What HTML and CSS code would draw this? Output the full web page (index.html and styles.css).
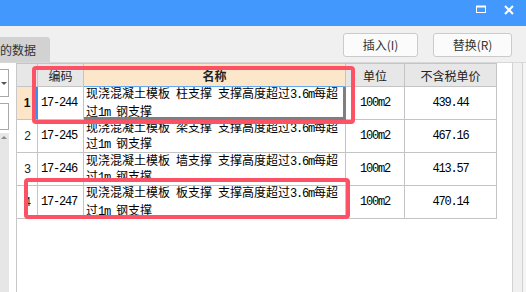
FILE: index.html
```html
<!DOCTYPE html>
<html>
<head>
<meta charset="utf-8">
<link rel="stylesheet" href="styles.css">
</head>
<body>
<div class="win">
  <div class="titlebar">
    <svg class="ico-max" width="12" height="10" viewBox="0 0 12 10"><rect x="1.5" y="1.5" width="9" height="6" fill="none" stroke="#fff" stroke-width="1"/><line x1="1" y1="1.5" x2="11" y2="1.5" stroke="#fff" stroke-width="2"/></svg>
    <svg class="ico-close" width="10" height="10" viewBox="0 0 10 10"><path d="M1 1 L9 9 M9 1 L1 9" stroke="#fff" stroke-width="2" fill="none"/></svg>
  </div>
  <div class="toolbar">
    <div class="tab">的数据</div>
    <button class="btn b1">插入(I)</button>
    <button class="btn b2">替换(R)</button>
  </div>
  <div class="main">
    <div class="side">
      <div class="box box1"><span class="arrow-down"></span></div>
      <div class="box box2"></div>
      <div class="scroll"><span class="arrow-up"></span></div>
    </div>
    <div class="gridwrap">
      <div class="grid">
        <div class="c h"></div>
        <div class="c h">编码</div>
        <div class="c h hn">名称</div>
        <div class="c h">单位</div>
        <div class="c h">不含税单价</div>

        <div class="c r num sel">1</div>
        <div class="c r code a">17-244</div>
        <div class="c r name edit"><div class="t t15">现浇混凝土模板<span class="a"> </span>柱支撑<span class="a"> </span>支撑高度超过<span class="a">3.6m</span>每超<br>过<span class="a">1m </span>钢支撑</div></div>
        <div class="c r ctr a">100m2</div>
        <div class="c r ctr a">439.44</div>

        <div class="c r num">2</div>
        <div class="c r code a">17-245</div>
        <div class="c r name"><div class="t t13">现浇混凝土模板<span class="a"> </span>梁支撑<span class="a"> </span>支撑高度超过<span class="a">3.6m</span>每超<br>过<span class="a">1m </span>钢支撑</div></div>
        <div class="c r ctr a">100m2</div>
        <div class="c r ctr a">467.16</div>

        <div class="c r num">3</div>
        <div class="c r code a">17-246</div>
        <div class="c r name"><div class="t t13">现浇混凝土模板<span class="a"> </span>墙支撑<span class="a"> </span>支撑高度超过<span class="a">3.6m</span>每超<br>过<span class="a">1m </span>钢支撑</div></div>
        <div class="c r ctr a">100m2</div>
        <div class="c r ctr a">413.57</div>

        <div class="c r num">4</div>
        <div class="c r code a">17-247</div>
        <div class="c r name"><div class="t t15">现浇混凝土模板<span class="a"> </span>板支撑<span class="a"> </span>支撑高度超过<span class="a">3.6m</span>每超<br>过<span class="a">1m </span>钢支撑</div></div>
        <div class="c r ctr a">100m2</div>
        <div class="c r ctr a">470.14</div>
      </div>
    </div>
    <div class="rstrip"></div>
    <div class="rest"></div>
  </div>
  <div class="mark m1"></div>
  <div class="mark m2"></div>
</div>
</body>
</html>
```

FILE: styles.css
```css
* { box-sizing: border-box; }
html, body { margin: 0; padding: 0; }
body {
  background: #f0f0f0;
  font-family: "Noto Sans CJK SC", "Liberation Sans", sans-serif;
  color: #111;
}
.win {
  position: relative;
  width: 526px;
  height: 292px;
  overflow: hidden;
  background: #f0f0f0;
}

/* title bar */
.titlebar {
  height: 26px;
  background: #4398fe;
  display: flex;
  justify-content: flex-end;
  align-items: flex-start;
  padding-top: 5px;
  padding-right: 12px;
  gap: 17px;
}

/* toolbar */
.toolbar {
  height: 36px;
  display: flex;
  align-items: flex-start;
  padding-top: 7px;
}
.tab {
  margin-top: 4px;
  height: 25px;
  width: 50px;
  background: #d2d2d2;
  border-top-right-radius: 3px;
  font-size: 12px;
  color: #333;
  line-height: 25px;
}
.btn {
  height: 24px;
  background: #fbfbfb;
  border: 1px solid #cbcbcb;
  border-radius: 3px;
  font-family: "Noto Sans CJK SC", "Liberation Sans", sans-serif;
  font-size: 12px;
  color: #333;
  padding: 0;
  line-height: 20px;
}
.b1 { width: 75px; margin-left: auto; }
.b2 { width: 79px; margin-left: 15px; margin-right: 14px; }

/* main area */
.main {
  height: 230px;
  display: flex;
  border-top: 1px solid #d8d8d8;
  background: #fff;
}
.side {
  width: 16px;
  background: #fff;
  display: flex;
  flex-direction: column;
}
.box {
  width: 9px;
  border: 1px solid #a8a8a8;
  border-left: none;
  background: #fff;
  position: relative;
}
.box1 { margin-top: 6px; height: 28px; }
.box2 { margin-top: 6px; height: 27px; }
.arrow-down {
  position: absolute;
  left: 1px;
  top: 12px;
  width: 0; height: 0;
  border-left: 3px solid transparent;
  border-right: 3px solid transparent;
  border-top: 3px solid #555;
}
.scroll {
  margin-top: 3px;
  width: 9px;
  flex: 1;
  background: #e6e6e6;
  position: relative;
}
.arrow-up {
  position: absolute;
  left: 1px;
  top: 3px;
  width: 0; height: 0;
  border-left: 3px solid transparent;
  border-right: 3px solid transparent;
  border-bottom: 3px solid #8a8a8a;
}
.gridwrap {
  width: 497px;
  border-left: 1px solid #c8c8c8;
  border-right: 1px solid #d2d2d2;
  background: #fff;
}
.rstrip {
  width: 10px;
  background: #f0f0f0;
  border-right: 1px solid #d0d0d0;
}
.rest { flex: 1; background: #f5f5f5; }

/* grid */
.grid {
  display: grid;
  grid-template-columns: 21px 46px 262px 59px 92px;
  width: 480px;
  border-top: 1px solid #c4c4c4;
}
.c {
  border-right: 1px solid #c4c4c4;
  border-bottom: 1px solid #c4c4c4;
  display: flex;
  align-items: center;
  white-space: nowrap;
}
.h {
  height: 23px;
  background: #e7e7e7;
  justify-content: center;
  font-size: 12px;
  color: #222;
}
.hn {
  background: #fde7ca;
  font-weight: bold;
  border-bottom-color: #64aaf2;
}
.r { height: 33px; background: #fff; }
.num {
  justify-content: center;
  font-family: "Liberation Sans", sans-serif;
  font-size: 12px;
  color: #222;
  padding-left: 1px;
}
.num.sel {
  background: #fde5c7;
  font-weight: bold;
  border-right: 2px solid #3b8ef4;
  color: #111;
}
.code { padding-left: 3px; }
.ctr { justify-content: center; }
.a {
  font-family: "Liberation Mono", "DejaVu Sans Mono", monospace;
  font-size: 12px;
  letter-spacing: -1.2px;
  color: #000;
}
.name {
  padding-left: 2px;
  font-size: 12px;
  color: #000;
}
.t { white-space: nowrap; }
.t13 { line-height: 13px; }
.t15 { line-height: 15px; }
.edit {
  border-right: 3px solid #7f7f7f;
  border-bottom: 3px solid #7f7f7f;
  padding-top: 1px;
}

/* annotation marks */
.mark {
  position: absolute;
  border: 4px solid #fd5166;
  border-radius: 4px;
}
.m1 { left: 32px; top: 66px; width: 323px; height: 58px; }
.m2 { left: 24px; top: 178px; width: 326px; height: 41px; }
```
